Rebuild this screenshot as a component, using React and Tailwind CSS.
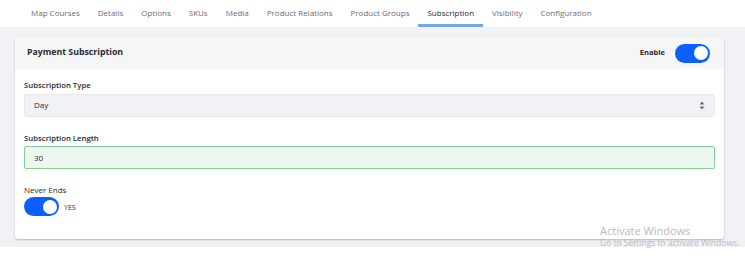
import { useState } from 'react';

const tabs = [
  'Map Courses',
  'Details',
  'Options',
  'SKUs',
  'Media',
  'Product Relations',
  'Product Groups',
  'Subscription',
  'Visibility',
  'Configuration',
];

function Toggle({ on, onClick }) {
  return (
    <button
      type="button"
      onClick={onClick}
      className={`flex h-[19px] w-[35px] items-center rounded-full p-[2.5px] ${on ? 'justify-end bg-[#0b5fff]' : 'justify-start bg-[#cfd3da]'}`}
    >
      <span className="block h-[14px] w-[14px] rounded-full bg-white" />
    </button>
  );
}

export default function App() {
  const [enabled, setEnabled] = useState(true);
  const [neverEnds, setNeverEnds] = useState(true);
  const [length, setLength] = useState('30');

  return (
    <div className="relative h-[267px] w-[745px] overflow-hidden bg-white font-['Open_Sans','Noto_Sans',sans-serif]">
      {/* Onglets */}
      <nav className="flex h-[27px] items-stretch bg-white pl-[22px]">
        {tabs.map(t => (
          <div
            key={t}
            className={`flex items-center border-b-[3px] px-[9px] pt-[2px] text-[8px] ${t === 'Subscription' ? 'border-[#72a6f5] text-[#272833]' : 'border-transparent text-[#6b6c7e]'}`}
          >
            {t}
          </div>
        ))}
      </nav>

      <div className="h-[220px] bg-[#f1f2f5] px-[15px] pt-[10px] pr-[21px]">
        {/* Carte */}
        <div className="h-[202px] overflow-hidden rounded-[3px] bg-white shadow-[0_1px_2px_rgba(0,0,0,0.25)]">
          <div className="flex h-[32px] items-center justify-between bg-[#f6f6f7] pl-[12px] pr-[14px]">
            <h2 className="text-[8.75px] font-bold text-[#272833]">Payment Subscription</h2>
            <div className="flex items-center gap-[10px]">
              <span className="text-[7.5px] font-bold text-[#272833]">Enable</span>
              <Toggle on={enabled} onClick={() => setEnabled(!enabled)} />
            </div>
          </div>

          <div className="px-[9px] pt-[11px]">
            <label className="block text-[7.75px] font-semibold text-[#272833]">Subscription Type</label>
            <div className="mt-[2px] flex h-[23px] items-center justify-between rounded-[3px] border border-[#e7e7ed] bg-[#f1f2f5] pl-[9px] pr-[9px] text-[8px] text-[#272833]">
              <span>Day</span>
              <svg width="6" height="9" viewBox="0 0 6 9" className="text-[#6b6c7e]">
                <path d="M3 0.5 L5.5 3.5 H0.5 Z" fill="currentColor" />
                <path d="M3 8.5 L5.5 5.5 H0.5 Z" fill="currentColor" />
              </svg>
            </div>

            <label className="mt-[16px] block text-[7.75px] font-semibold text-[#272833]">Subscription Length</label>
            <input
              value={length}
              onChange={e => setLength(e.target.value)}
              className="mt-[2px] block h-[23px] w-full rounded-[2px] border border-[#80d393] bg-[#edf7ef] pl-[9px] text-[8px] text-[#272833] outline-none"
            />

            <label className="mt-[15px] block text-[8px] text-[#272833]">Never Ends</label>
            <div className="mt-[1px] flex items-center gap-[5px]">
              <Toggle on={neverEnds} onClick={() => setNeverEnds(!neverEnds)} />
              <span className="pt-[2px] text-[7px] text-[#272833]">{neverEnds ? 'YES' : 'NO'}</span>
            </div>
          </div>
        </div>
      </div>

      {/* Filigrane */}
      <div className="pointer-events-none absolute left-[600px] top-[225px] leading-none text-[#b9b9bd]">
        <div className="text-[11px]">Activate Windows</div>
        <div className="mt-[3px] text-[8.5px]">Go to Settings to activate Windows.</div>
      </div>
    </div>
  );
}
